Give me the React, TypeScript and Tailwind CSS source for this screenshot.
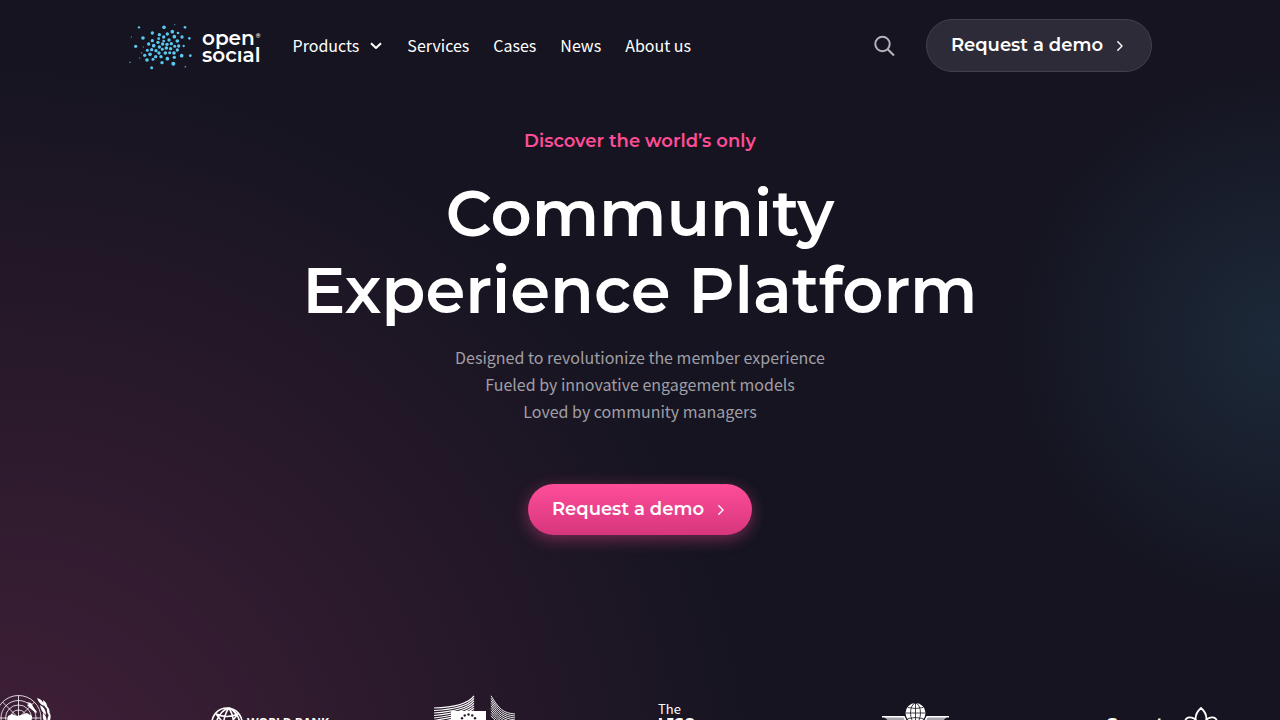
import React from 'react';

const bodyFont = "font-['Noto_Sans_CJK_JP',sans-serif]";
const displayFont = "font-['Montserrat','Inter',sans-serif]";

const navLinks = ['Services', 'Cases', 'News', 'About us'];

const taglines = [
  'Designed to revolutionize the member experience',
  'Fueled by innovative engagement models',
  'Loved by community managers',
];

// x, y, radius
const logoDots = [
  [57, 36, 3.5], [132, 36, 5.5], [164, 28, 2], [195, 36, 4], [34, 65, 2], [69, 68, 5.5], [97, 53, 5],
  [118, 58, 5], [142, 56, 5], [157, 49, 5.5], [174, 53, 4], [186, 65, 5], [208, 69, 4], [97, 76, 5],
  [116, 70, 4], [131, 65, 5], [163, 64, 5.5], [147, 74, 5], [172, 77, 5.5], [114, 81, 5], [131, 77, 4],
  [47, 93, 5], [70, 95, 2], [86, 86, 5], [101, 91, 5.5], [128, 86, 5], [141, 87, 5], [154, 85, 5],
  [164, 93, 4.5], [176, 92, 5], [191, 92, 3.5], [82, 105, 4.5], [95, 103, 5], [118, 95, 5], [127, 102, 4.5],
  [139, 98, 5.5], [152, 100, 5], [172, 104, 5], [65, 113, 2.5], [108, 106, 5], [117, 113, 5], [136, 113, 5.5],
  [149, 112, 4.5], [162, 113, 5.5], [74, 120, 5], [90, 117, 5.5], [107, 124, 5], [123, 124, 5], [185, 121, 5.5],
  [211, 121, 4], [59, 128, 2], [81, 134, 5.5], [99, 132, 4.5], [142, 130, 5.5], [163, 126, 5], [126, 142, 5],
  [160, 145, 6], [95, 157, 4.5], [196, 154, 2.5], [30, 141, 2.5],
];

function Logo() {
  return (
    <a href="#" aria-label="Open Social" className="flex items-center gap-2 text-white">
      <svg width="66" height="48" viewBox="24 20 198 144" fill="#5bc8ef" aria-hidden="true">
        {logoDots.map(([x, y, r], i) => (
          <circle key={i} cx={x} cy={y} r={r} opacity={r < 3 ? 0.7 : 1} />
        ))}
      </svg>
      <span className={`${displayFont} relative block pt-0.5 text-[20px] leading-[17px] font-semibold`}>
        open<br />socıal
        <span className="absolute top-1 right-0 text-[6px] leading-[8px]">®</span>
      </span>
    </a>
  );
}

function Chevron({ className = '' }: { className?: string }) {
  return (
    <svg width="6" height="10" viewBox="0 0 6 10" fill="none" stroke="currentColor" strokeWidth="1.4" className={className} aria-hidden="true">
      <path d="M0.8 0.8L5 5L0.8 9.2" strokeLinecap="round" strokeLinejoin="round" />
    </svg>
  );
}

function Header() {
  return (
    <header className="mx-auto flex w-full max-w-5xl items-center pt-[19px]">
      <Logo />
      <nav className="ml-8 flex items-center gap-6 pb-0.5 text-base text-white">
        <button type="button" className="flex items-center gap-2.5">
          Products
          <svg width="14" height="8" viewBox="0 0 14 8" fill="none" stroke="currentColor" strokeWidth="2" aria-hidden="true">
            <path d="M2 2.2L7 7L12 2.2" />
          </svg>
        </button>
        {navLinks.map((link) => (
          <a key={link} href="#">{link}</a>
        ))}
      </nav>
      <button type="button" aria-label="Search" className="ml-auto text-[#b5b4b8]">
        <svg width="22" height="22" viewBox="0 0 22 22" fill="none" stroke="currentColor" strokeWidth="2" aria-hidden="true">
          <circle cx="8.5" cy="9" r="7.2" />
          <path d="M13.7 14.2L20 20.5" />
        </svg>
      </button>
      <a href="#" className={`${displayFont} ml-[30px] flex h-[53px] items-center rounded-full border border-[#43414e] bg-[#2d2b38] px-6 text-lg font-semibold text-white`}>
        <span className="pb-0.5">Request a demo</span>
        <Chevron className="mr-1 ml-3.5" />
      </a>
    </header>
  );
}

function UnitedNations() {
  return (
    <svg width="65" height="56" viewBox="0 0 65 56" fill="none" stroke="#fff" strokeWidth="0.8" aria-label="United Nations" role="img">
      <circle cx="32.5" cy="23" r="22.5" />
      <circle cx="32.5" cy="23" r="17.5" />
      <circle cx="32.5" cy="23" r="13" />
      <circle cx="32.5" cy="23" r="8" />
      <path d="M32.5 0.5V46M10 23H55M16.5 7L48.5 39M48.5 7L16.5 39" />
      <path fill="#fff" stroke="none" d="M41 7l4 1 3 5 3 4-1 1-5-4-4-4 2-1zM22 21l4-2 5 2 4-1 6-2 5 3-1 5-5 4-4 8-5-3-5-7-5-2z" />
      <g fill="#fff" stroke="none">
        <path d="M51 3Q57 4 58 11Q53 9 51 3ZM57 5Q62 8 61 14Q57 11 57 5ZM54 10Q60 13 60 20Q55 17 54 10ZM61 11Q65 15 63 21Q60 17 61 11ZM57 18Q62 22 60 29Q56 25 57 18ZM64 18Q66 24 62 29Q60 24 64 18ZM59 27Q61 34 55 38Q54 32 59 27ZM64 28Q63 35 57 38Q58 31 64 28ZM55 35Q53 42 45 45Q48 37 55 35ZM58 40Q54 47 44 48Q50 41 58 40Z" />
        <path d="M14 3Q8 4 7 11Q12 9 14 3ZM8 5Q3 8 4 14Q8 11 8 5ZM11 10Q5 13 5 20Q10 17 11 10ZM4 11Q0 15 2 21Q5 17 4 11ZM8 18Q3 22 5 29Q9 25 8 18ZM1 18Q-1 24 3 29Q5 24 1 18ZM6 27Q4 34 10 38Q11 32 6 27ZM1 28Q2 35 8 38Q7 31 1 28ZM10 35Q12 42 20 45Q17 37 10 35ZM7 40Q11 47 21 48Q15 41 7 40Z" />
      </g>
    </svg>
  );
}

function WorldBank() {
  return (
    <div className="flex items-center gap-1 font-['Open_Sans',sans-serif] text-xs font-bold whitespace-nowrap">
      <svg width="33" height="32" viewBox="0 0 33 32" fill="none" stroke="#fff" strokeWidth="1.6" aria-hidden="true">
        <circle cx="17" cy="16" r="15" />
        <path d="M19 1Q13 8 12 30M19 1Q25 10 24 29M19 1Q8 4 4 23M19 1Q29 5 31 21M6 7Q17 12 28 7M2 15Q17 21 32 15M4 23Q17 29 29 24M6 7L24 29M28 7L10 29" />
      </svg>
      WORLD BANK
    </div>
  );
}

function EuropeanCommission() {
  return (
    <svg width="82" height="56" viewBox="0 0 82 56" aria-label="European Commission" role="img">
      <g fill="none" stroke="#fff" strokeWidth="1.2">
        {[0, 2.5, 5, 7.5, 10, 12.5, 15, 17.5, 20].map((y) => (
          <path key={y} d={`M0 ${13 + y}Q32 ${12 + y * 0.7} 40 ${0.8 + y}`} />
        ))}
        {[0, 2.5, 5, 7.5, 10, 12.5, 15, 17.5, 20].map((y) => (
          <path key={`r${y}`} d={`M57 ${0.8 + y}C65 ${14 + y * 0.8} 69 ${18 + y * 0.7} 81 ${19 + y * 0.8}`} strokeWidth="0.9" />
        ))}
      </g>
      <rect x="17" y="16" width="35" height="24" fill="#fff" />
      <g fill="#2b1b2c">
        {[0, 1, 2, 3, 4, 5, 6, 7, 8, 9, 10, 11].map((i) => (
          <circle key={i} cx={34.5 + 7.5 * Math.sin((i * Math.PI) / 6)} cy={27 - 7.5 * Math.cos((i * Math.PI) / 6)} r="1.2" />
        ))}
      </g>
    </svg>
  );
}

function Lego() {
  return (
    <div className="pb-3.5 text-[13px] leading-[14px]">
      The
      <div className="font-['Open_Sans',sans-serif] text-sm leading-[14px] font-extrabold">LEGO</div>
    </div>
  );
}

function Iata() {
  return (
    <svg width="67" height="40" viewBox="0 0 67 40" aria-label="IATA" role="img">
      <path fill="#a7a5ac" d="M2 14h20l4 8H11zM65 14H45l-4 8h15z" />
      <path fill="none" stroke="#fff" strokeWidth="1.6" d="M0 13.8H22L26 22M67 13.8H45L41 22" />
      <circle cx="33.5" cy="10" r="10" fill="#fff" />
      <g fill="none" stroke="#151420" strokeWidth="0.8">
        <ellipse cx="33.5" cy="10" rx="5" ry="9.8" />
        <path d="M33.5 0V20M23.5 10H43.5M26 4.5Q33.5 6.5 41 4.5M26 15.5Q33.5 13.5 41 15.5" />
      </g>
      <path fill="#fff" d="M18 23h31l-6 5H24zM24 30h19l-4 5H28z" />
    </svg>
  );
}

function Scouts() {
  return (
    <div className="flex items-center gap-2 font-['Open_Sans',sans-serif] text-[21px] leading-7 font-bold">
      <span className="pt-1">Scouts</span>
      <svg width="36" height="32" viewBox="0 0 36 32" fill="none" stroke="#fff" strokeWidth="1.7" aria-hidden="true">
        <path d="M18 1Q9 9 15 19H21Q27 9 18 1ZM14 17C14 10 4 8 2 14C1 19 6 21 8 17M22 17C22 10 32 8 34 14C35 19 30 21 28 17M10 21H26M15 22Q15 28 11 28M21 22Q21 28 25 28M18 22V31" />
      </svg>
    </div>
  );
}

const clients = [UnitedNations, WorldBank, EuropeanCommission, Lego, Iata, Scouts];

export default function App() {
  return (
    <div className={`${bodyFont} min-h-screen overflow-hidden bg-[#151420] bg-[radial-gradient(circle_at_100%_340px,#1c2939_0px,transparent_275px),radial-gradient(circle_at_0%_820px,#432039_0px,#151420_780px)] text-white`}>
      <Header />
      <main>
        <section className="flex flex-col items-center px-8 pt-14 text-center">
          <p className={`${displayFont} text-lg leading-[26px] font-semibold text-[#ff4d97]`}>Discover the world’s only</p>
          <h1 className={`${displayFont} mt-[21px] text-[64px] leading-[77px] font-semibold`}>
            Community<br />Experience Platform
          </h1>
          <div className="mt-[15px] text-base leading-[27px] text-[#a09fa6]">
            {taglines.map((line) => (
              <p key={line}>{line}</p>
            ))}
          </div>
          <a href="#" className={`${displayFont} mt-[59px] flex h-[51px] items-center rounded-full bg-linear-to-b from-[#ff4d9a] to-[#d6367c] px-6 text-lg font-semibold shadow-[0_4px_16px_rgba(255,77,151,0.4)]`}>
            <span className="pb-0.5">Request a demo</span>
            <Chevron className="mr-1 ml-3.5" />
          </a>
        </section>
        <ul className="mt-[158px] -ml-3.5 flex h-[60px] items-center">
          {clients.map((Client, i) => (
            <li key={i} className="w-56 shrink-0"><Client /></li>
          ))}
        </ul>
      </main>
    </div>
  );
}
